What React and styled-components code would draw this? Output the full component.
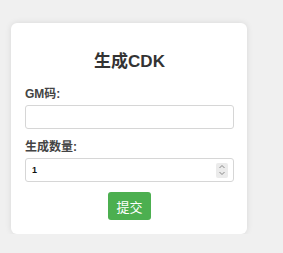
import React, {useState} from 'react';
import styled, {createGlobalStyle} from 'styled-components';

const Global = createGlobalStyle`
	body {
		margin: 0;
		background: #f0f0f0;
		font-family: "Liberation Sans", Arial, "Noto Sans CJK SC", sans-serif;
	}
`

const App = () => {
	const [gm, setGm] = useState('');
	const [count, setCount] = useState(1);

	return (
		<>
		<Global />
		<Page>
			<Card>
				<Title>生成CDK</Title>
				<Label>GM码:</Label>
				<TextInput value={gm} onChange={e => setGm(e.target.value)} />
				<Label>生成数量:</Label>
				<NumberBox>
					<NumberInput type="number" value={count} onChange={e => setCount(e.target.value)} />
					<Spinner>
						<svg width="8" height="14" viewBox="0 0 8 14">
							<path d="M1.5 5 L4 2.5 L6.5 5" fill="none" stroke="#888" strokeWidth="1" />
							<path d="M1.5 9 L4 11.5 L6.5 9" fill="none" stroke="#888" strokeWidth="1" />
						</svg>
					</Spinner>
				</NumberBox>
				<Actions>
					<Submit>提交</Submit>
				</Actions>
			</Card>
		</Page>
		</>
	);
}

export default App;

// styles
const Page = styled.div`
	padding: 23px 0 0 11px;
`
const Card = styled.div`
	width: 236px;
	box-sizing: border-box;
	background: #fff;
	border-radius: 6px;
	box-shadow: 0 0 6px rgba(0,0,0,.1);
	padding: 29px 13px 14px 14px;
`
const Title = styled.h2`
	margin: 0 0 15px;
	text-align: center;
	font-size: 17px;
	line-height: 20px;
	font-weight: bold;
	color: #333;
`
const Label = styled.div`
	font-size: 12px;
	line-height: 14px;
	font-weight: bold;
	color: #444;
	margin-bottom: 4px;
`
const TextInput = styled.input`
	display: block;
	width: 100%;
	box-sizing: border-box;
	height: 24px;
	border: 1px solid #d6d6d6;
	border-radius: 3px;
	margin: 0 0 11px;
	outline: none;
`
const NumberBox = styled.div`
	display: flex;
	align-items: center;
	height: 24px;
	box-sizing: border-box;
	border: 1px solid #d6d6d6;
	border-radius: 3px;
	padding: 0 5px 0 6px;
`
const NumberInput = styled.input`
	flex: 1;
	min-width: 0;
	border: none;
	outline: none;
	padding: 0;
	font-size: 9px;
	font-weight: bold;
	font-family: "Liberation Sans", Arial, sans-serif;
	color: #111;
	-moz-appearance: textfield;
	&::-webkit-inner-spin-button,
	&::-webkit-outer-spin-button {
		-webkit-appearance: none;
		margin: 0;
	}
`
const Spinner = styled.div`
	display: flex;
	align-items: center;
	justify-content: center;
	width: 12px;
	height: 15px;
	background: #ebebeb;
	border-radius: 2px;
`
const Actions = styled.div`
	display: flex;
	justify-content: center;
	margin-top: 10px;
`
const Submit = styled.button`
	width: 43px;
	height: 28px;
	padding: 0;
	border: none;
	border-radius: 3px;
	background: #4caf50;
	color: #fff;
	font-size: 13px;
	font-family: "Liberation Sans", Arial, "Noto Sans CJK SC", sans-serif;
	cursor: pointer;
`
